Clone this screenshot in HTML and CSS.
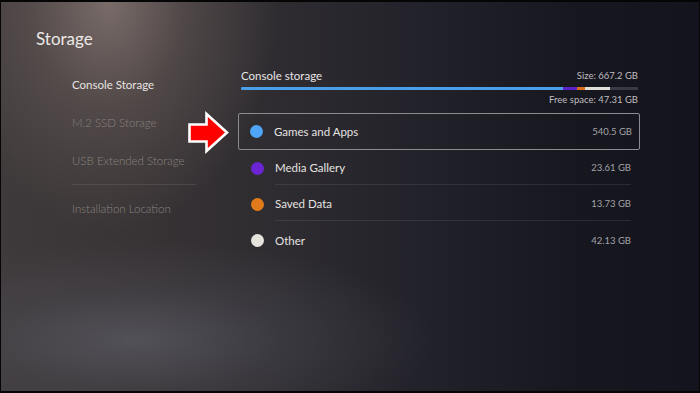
FILE: index.html
```html
<!DOCTYPE html>
<html lang="en">
<head>
<meta charset="utf-8">
<title>Storage</title>
<link rel="stylesheet" href="styles.css">
</head>
<body>
<div class="screen">
  <h1 class="title">Storage</h1>
  <div class="main">
    <nav class="nav">
      <div class="nav-item active">Console Storage</div>
      <div class="nav-item">M.2 SSD Storage</div>
      <div class="nav-item">USB Extended Storage</div>
      <div class="nav-divider"></div>
      <div class="nav-item">Installation Location</div>
    </nav>
    <section class="panel">
      <div class="panel-head">
        <span class="head-label">Console storage</span>
        <span class="head-size">Size: 667.2 GB</span>
      </div>
      <div class="bar">
        <span class="seg seg-games" style="width:322px"></span>
        <span class="seg seg-media" style="width:14px"></span>
        <span class="seg seg-saved" style="width:8px"></span>
        <span class="seg seg-other" style="width:25px"></span>
        <span class="seg seg-free"></span>
      </div>
      <div class="free">Free space: 47.31 GB</div>
      <ul class="rows">
        <li class="row selected">
          <span class="dot dot-games"></span>
          <div class="row-body"><span class="row-label">Games and Apps</span><span class="row-value">540.5 GB</span></div>
        </li>
        <li class="row">
          <span class="dot dot-media"></span>
          <div class="row-body"><span class="row-label">Media Gallery</span><span class="row-value">23.61 GB</span></div>
        </li>
        <li class="row">
          <span class="dot dot-saved"></span>
          <div class="row-body"><span class="row-label">Saved Data</span><span class="row-value">13.73 GB</span></div>
        </li>
        <li class="row">
          <span class="dot dot-other"></span>
          <div class="row-body"><span class="row-label">Other</span><span class="row-value">42.13 GB</span></div>
        </li>
      </ul>
    </section>
  </div>
  <svg class="arrow" width="700" height="393" viewBox="0 0 700 393" aria-hidden="true">
    <polygon points="189.5,124.5 206.5,124.5 206.5,114 227,132.5 206.5,151 206.5,141.5 189.5,141.5" fill="#ff0000" stroke="#ffffff" stroke-width="2.6" stroke-linejoin="miter"/>
  </svg>
</div>
</body>
</html>
```
FILE: styles.css
```css
* { box-sizing: border-box; }
html, body { margin: 0; padding: 0; }
body {
  width: 700px;
  height: 393px;
  overflow: hidden;
  background: #000;
  font-family: "Lato", "Noto Sans", sans-serif;
  font-weight: 300;
}
.screen {
  position: relative;
  width: 700px;
  height: 393px;
  border: 1px solid #050506;
  border-top-width: 2px;
  border-bottom-width: 2px;
  background-color: #15151f;
  background-image:
    radial-gradient(ellipse 170px 230px at 108px 0px, rgba(160,142,136,0.62) 0%, rgba(130,114,110,0.34) 45%, rgba(100,88,86,0) 100%),
    radial-gradient(ellipse 300px 100px at 135px 338px, rgba(100,100,112,0.6) 0%, rgba(85,85,96,0.3) 50%, rgba(70,70,80,0) 100%),
    linear-gradient(90deg, #3e393a 0%, #373234 22%, #2d2b30 42%, #21212a 62%, #16171f 82%, #13141d 100%);
  overflow: hidden;
}
.title {
  margin: 0;
  padding: 26px 0 0 35px;
  font-size: 17px;
  font-weight: 400;
  line-height: 22px;
  color: #ebe8e6;
  height: 64px;
}
.main {
  display: flex;
  padding-left: 71px;
}
.nav {
  width: 166px;
  display: flex;
  flex-direction: column;
}
.nav-item {
  height: 38px;
  line-height: 38px;
  font-size: 11.5px;
  color: #88837f;
  white-space: nowrap;
}
.nav-item.active { color: #e6e3e0; font-weight: 400; }
.nav-divider {
  height: 10px;
  width: 124px;
  background: linear-gradient(#0000 4.5px, rgba(120,112,110,0.3) 4.5px, rgba(120,112,110,0.3) 5.5px, #0000 5.5px);
}
.panel {
  width: 402px;
}
.panel-head {
  display: flex;
  justify-content: space-between;
  align-items: center;
  height: 18px;
  padding: 0 2px 0 3px;
}
.head-label { font-size: 11.5px; color: #e6e4e4; font-weight: 400; }
.head-size { font-size: 9.5px; color: #c0bec0; font-weight: 400; }
.bar {
  display: flex;
  height: 3px;
  margin: 3px 2px 0 3px;
  background: #3a3a44;
  border-radius: 1px;
  overflow: hidden;
}
.seg { display: block; height: 3px; flex: none; }
.seg-games { background: #4a9fe8; }
.seg-media { background: #5a22c6; }
.seg-saved { background: #d76e1e; }
.seg-other { background: #e2ded8; }
.seg-free { flex: 1; background: #3a3a44; }
.free {
  height: 16px;
  line-height: 16px;
  margin-top: 2px;
  text-align: right;
  padding-right: 2px;
  font-size: 9.5px;
  font-weight: 400;
  color: #c0bec0;
}
.rows {
  list-style: none;
  margin: 5px 0 0 0;
  padding: 0;
}
.row {
  display: flex;
  align-items: stretch;
  height: 36px;
  padding: 0 8px 0 12px;
  border: 1px solid transparent;
}
.row.selected {
  height: 37px;
  border-color: #8c8b90;
  border-radius: 2px;
  padding-left: 11px;
  padding-right: 7px;
}
.dot {
  flex: none;
  width: 13px;
  height: 13px;
  border-radius: 50%;
  align-self: center;
  margin-right: 11px;
}
.dot-games { background: #4ea5f5; }
.dot-media { background: #6a24d2; }
.dot-saved { background: #e07a1a; }
.dot-other { background: #e6e2dc; }
.row-body {
  flex: 1;
  display: flex;
  justify-content: space-between;
  align-items: center;
}
.row:not(.selected):not(:last-child) .row-body {
  border-bottom: 1px solid rgba(120,120,130,0.22);
}
.row-label { font-size: 11.5px; color: #e4e2e0; font-weight: 400; }
.row-value { font-size: 9.5px; color: #a4a3a6; font-weight: 400; }
.arrow {
  position: absolute;
  left: -1px;
  top: -2px;
  pointer-events: none;
}
```
